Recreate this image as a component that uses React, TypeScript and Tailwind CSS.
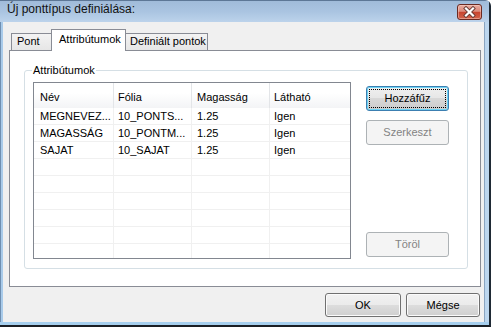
import React from "react";

type BtnProps = {
  children: React.ReactNode;
  disabled?: boolean;
  focused?: boolean;
  className?: string;
};

function Btn({ children, disabled, focused, className = "" }: BtnProps) {
  if (disabled) {
    return (
      <div
        className={`flex items-center justify-center rounded-[3px] border border-[#adb2b5] bg-[#f4f4f4] text-[#838383] ${className}`}
      >
        {children}
      </div>
    );
  }
  if (focused) {
    return (
      <div
        className={`relative flex items-center justify-center rounded-[3px] border border-[#3c7fb1] bg-[linear-gradient(180deg,#f0f0f0_0%,#e6e6e6_50%,#d8d8d8_50%,#cbcbcb_100%)] text-black shadow-[inset_0_0_0_1px_#6cd3f5] ${className}`}
      >
        <div className="pointer-events-none absolute inset-[2px] border border-dotted border-black" />
        <span className="relative">{children}</span>
      </div>
    );
  }
  return (
    <div
      className={`flex items-center justify-center rounded-[3px] border border-[#707070] bg-[linear-gradient(180deg,#f2f2f2_0%,#ebebeb_50%,#dddddd_50%,#cfcfcf_100%)] text-black shadow-[inset_0_0_0_1px_#fbfbfb] ${className}`}
    >
      {children}
    </div>
  );
}

const rows: string[][] = [
  ["MEGNEVEZ...", "10_PONTS...", "1.25", "Igen"],
  ["MAGASSÁG", "10_PONTM...", "1.25", "Igen"],
  ["SAJAT", "10_SAJAT", "1.25", "Igen"],
  ["", "", "", ""],
  ["", "", "", ""],
  ["", "", "", ""],
  ["", "", "", ""],
  ["", "", "", ""],
  ["", "", "", ""],
];

export default function App() {
  return (
    <div className="w-[491px] h-[327px] overflow-hidden font-['Liberation_Sans',Arial,sans-serif] text-[11px] leading-[13px] text-black">
      <div className="flex h-full flex-col rounded-tr-[6px] border-t border-r-2 border-b-2 border-t-[#5d7796] border-r-[#1f2a35] border-b-[#1a1f25] bg-[#b7d3ee]">
        {/* title bar */}
        <div className="flex h-[21px] shrink-0 items-start bg-[linear-gradient(180deg,#a0bbd9_0%,#aac4e1_50%,#bcd3eb_100%)]">
          <div className="pl-[7px] pt-[1px] text-[12px] leading-[15px] text-[#111]">
            Új ponttípus definiálása:
          </div>
          <div className="flex-1" />
          <div className="mr-[7px] mt-[3px] h-[16px] w-[25px] rounded-[3px] border border-[#6b2a22] bg-[linear-gradient(180deg,#e9ab9f_0%,#dc8a7b_45%,#c8442f_52%,#d2644c_100%)] shadow-[inset_0_0_0_1px_rgba(255,220,210,0.45)]">
            <svg width="23" height="14" viewBox="0 0 23 14">
              <path d="M8 3.5 L15 10.5 M15 3.5 L8 10.5" stroke="#6a3a34" strokeWidth="4" strokeLinecap="square" />
              <path d="M8 3.5 L15 10.5 M15 3.5 L8 10.5" stroke="#ffffff" strokeWidth="2.2" strokeLinecap="square" />
            </svg>
          </div>
        </div>
        {/* body row */}
        <div className="flex flex-1">
          <div className="w-[3px] shrink-0 border-l border-[#6f8fb1] bg-[#a9cbea]" />
          {/* client area */}
          <div className="flex w-[481px] shrink-0 flex-col bg-[#f0f0f0] pl-[6px] pr-[3px] pt-[7px]">
            {/* tab strip */}
            <div className="flex h-[21px] items-end pl-[2px]">
              <div className="h-[17px] w-[40px] border-l border-t border-[#898c95] bg-[linear-gradient(180deg,#f3f3f3,#e6e6e6)] pl-[5px] pt-[1px]">
                Pont
              </div>
              <div className="relative z-10 -mb-px h-[22px] w-[75px] border-l border-r border-t border-[#898c95] bg-white pl-[7px] pt-[3px]">
                Attribútumok
              </div>
              <div className="h-[17px] w-[82px] border-r border-t border-[#898c95] bg-[linear-gradient(180deg,#f3f3f3,#e6e6e6)] pl-[4px] pt-[1px] whitespace-nowrap">
                Definiált pontok
              </div>
            </div>
            {/* tab panel */}
            <div className="h-[237px] w-[472px] border border-[#898c95] bg-white">
              <div className="relative ml-[14px] mt-[19px] h-[199px] w-[444px] rounded-[3px] border border-[#d5dfe5]">
                <div className="absolute left-[7px] top-[-7px] bg-white px-[1px]">Attribútumok</div>
                <div className="flex pl-[8px] pt-[11px]">
                  {/* list view */}
                  <div className="h-[177px] w-[318px] overflow-hidden border border-[#828790] bg-white">
                    <div className="flex h-[25px] bg-[linear-gradient(180deg,#ffffff_0%,#ffffff_40%,#f3f4f6_100%)]">
                      <div className="w-[80px] border-r border-[#e3e5e8] pl-[6px] pt-[8px]">Név</div>
                      <div className="w-[78px] border-r border-[#e3e5e8] pl-[4px] pt-[8px]">Fólia</div>
                      <div className="w-[78px] border-r border-[#e3e5e8] pl-[5px] pt-[8px]">Magasság</div>
                      <div className="w-[80px] pl-[4px] pt-[8px]">Látható</div>
                    </div>
                    {rows.map((r, i) => (
                      <div key={i} className="flex h-[17px] border-b border-[#f0f0f0]">
                        <div className="w-[80px] border-r border-[#f0f0f0] pl-[6px] pt-[2px] whitespace-nowrap overflow-hidden">{r[0]}</div>
                        <div className="w-[78px] border-r border-[#f0f0f0] pl-[4px] pt-[2px] whitespace-nowrap overflow-hidden">{r[1]}</div>
                        <div className="w-[78px] border-r border-[#f0f0f0] pl-[5px] pt-[2px] whitespace-nowrap overflow-hidden">{r[2]}</div>
                        <div className="w-[80px] pl-[4px] pt-[2px] whitespace-nowrap overflow-hidden">{r[3]}</div>
                      </div>
                    ))}
                  </div>
                  {/* buttons */}
                  <div className="ml-[15px] flex h-[177px] flex-col pt-[4px]">
                    <Btn focused className="h-[25px] w-[83px]">Hozzáfűz</Btn>
                    <Btn disabled className="mt-[9px] h-[25px] w-[83px]">Szerkeszt</Btn>
                    <div className="flex-1" />
                    <Btn disabled className="mb-[2px] h-[25px] w-[83px]">Töröl</Btn>
                  </div>
                </div>
              </div>
            </div>
            {/* bottom buttons */}
            <div className="mt-[6px] flex justify-end gap-[5px] pr-[1px]">
              <Btn className="h-[24px] w-[76px]">OK</Btn>
              <Btn className="h-[24px] w-[74px]">Mégse</Btn>
            </div>
          </div>
          <div className="flex-1 border-l border-[#8aa4c0] bg-[#bcd6ee]" />
        </div>
        <div className="h-[3px] shrink-0 bg-[#a6cfee]" />
      </div>
    </div>
  );
}
